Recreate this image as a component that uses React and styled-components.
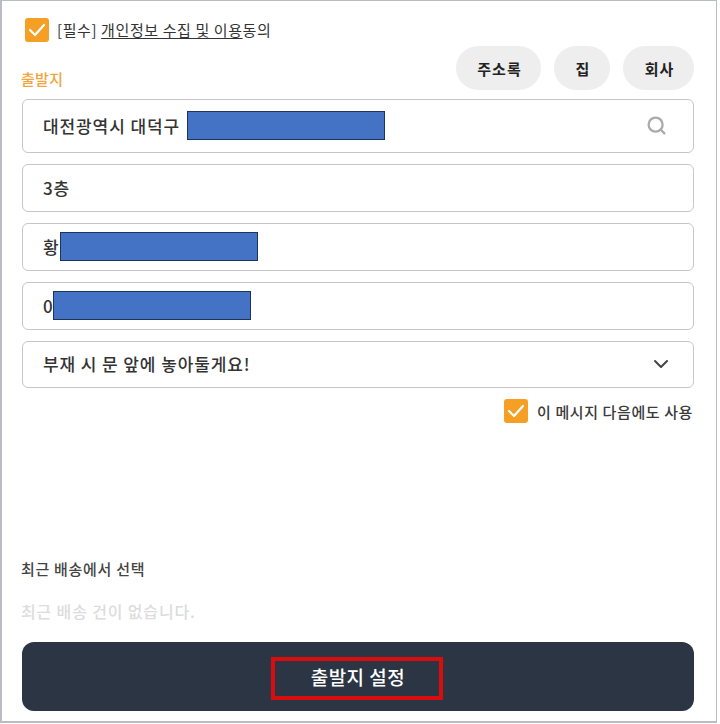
import React from 'react';
import styled, { createGlobalStyle } from 'styled-components';
import { FiSearch, FiChevronDown } from 'react-icons/fi';

const fontStack = `"Noto Sans CJK KR", "Noto Sans", sans-serif`;

const GlobalStyle = createGlobalStyle`
  html, body {
    margin: 0;
    padding: 0;
    background: #fff;
    font-family: ${fontStack};
  }
  * { box-sizing: border-box; }
`;

const Frame = styled.div`
  width: 717px;
  height: 723px;
  border: 1px solid #b9bdc2;
  border-left-width: 2px;
  border-bottom-width: 2px;
  padding: 16px 22px 10px 19px;
  display: flex;
  flex-direction: column;
  background: #fff;
`;

const AgreeRow = styled.div`
  display: flex;
  align-items: center;
  gap: 8px;
  padding-left: 4px;
  height: 25px;
  font-size: 15px;
  letter-spacing: 0.6px;
  color: #333;
`;

const CheckBox = styled.span`
  width: 24px;
  height: 24px;
  border-radius: 3px;
  background: #f5a024;
  display: flex;
  align-items: center;
  justify-content: center;
  flex: none;
`;

const Underlined = styled.span`
  text-decoration: underline;
  text-underline-offset: 2px;
`;

const HeaderRow = styled.div`
  display: flex;
  justify-content: space-between;
  align-items: flex-end;
  margin-top: 4px;
  height: 44px;
`;

const Origin = styled.span`
  font-size: 15px;
  font-weight: 500;
  letter-spacing: 0.3px;
  color: #f0a63c;
  line-height: 20px;
  margin-bottom: 1px;
`;

const Pills = styled.div`
  display: flex;
  gap: 13px;
`;

const Pill = styled.button`
  height: 44px;
  width: ${p => p.$w}px;
  border: none;
  border-radius: 22px;
  background: #eeeeee;
  color: #222;
  font-family: inherit;
  font-size: 15px;
  letter-spacing: 1px;
  font-weight: 700;
  padding: 0 0 0 2px;
`;

const Fields = styled.div`
  display: flex;
  flex-direction: column;
  gap: 11px;
  margin-top: 9px;
  margin-left: 1px;
`;

const Field = styled.div`
  height: ${p => p.$h || 48}px;
  border: 1px solid #c6c6c6;
  border-radius: 6px;
  padding: 0 22px 2px 20px;
  display: flex;
  align-items: center;
  font-size: 17px;
  letter-spacing: 0.9px;
  font-weight: 500;
  color: #333;
  background: #fff;
`;

const Redacted = styled.span`
  width: 198px;
  height: 29px;
  background: #4472c4;
  border: 1px solid #1d3557;
  margin-left: ${p => p.$gap || 0}px;
  flex: none;
`;

const Trailing = styled.span`
  margin-left: auto;
  display: flex;
  align-items: center;
  color: ${p => p.$color};
`;

const RememberRow = styled.div`
  display: flex;
  justify-content: flex-end;
  align-items: center;
  gap: 9px;
  margin-top: 11px;
  padding-right: 1px;
  font-size: 15px;
  letter-spacing: 0.6px;
  font-weight: 500;
  color: #3a3a3a;
  height: 24px;
`;

const Recent = styled.div`
  margin-top: auto;
  margin-left: 1px;
`;

const RecentTitle = styled.div`
  margin-left: -1px;
  font-size: 15px;
  letter-spacing: 0.7px;
  font-weight: 500;
  color: #444;
  line-height: 20px;
`;

const Empty = styled.div`
  margin: 21px 0 0 -1px;
  font-size: 16px;
  letter-spacing: 0.85px;
  font-weight: 500;
  color: #dcdcdc;
  line-height: 22px;
`;

const Submit = styled.button`
  position: relative;
  display: block;
  width: 100%;
  height: 69px;
  margin-top: 20px;
  border: none;
  border-radius: 12px;
  background: #2b3543;
  color: #fff;
  font-family: inherit;
  font-size: 19px;
  letter-spacing: 0.5px;
  font-weight: 500;
  padding: 0;
`;

const Highlight = styled.span`
  position: absolute;
  left: 249px;
  top: 15px;
  width: 172px;
  height: 43px;
  border: 4px solid #d90d0d;
`;

const Check = () => (
  <svg width="18" height="14" viewBox="0 0 18 14" fill="none">
    <path d="M2 7l5 5 9-10" stroke="#fff" strokeWidth="2.2" strokeLinecap="round" strokeLinejoin="round" />
  </svg>
);

export default function App() {
  return (
    <>
      <GlobalStyle />
      <Frame>
        <AgreeRow>
          <CheckBox><Check /></CheckBox>
          <span>[필수] <Underlined>개인정보 수집 및 이용</Underlined>동의</span>
        </AgreeRow>

        <HeaderRow>
          <Origin>출발지</Origin>
          <Pills>
            <Pill $w={85}>주소록</Pill>
            <Pill $w={56}>집</Pill>
            <Pill $w={71}>회사</Pill>
          </Pills>
        </HeaderRow>

        <Fields>
          <Field $h={54}>
            대전광역시 대덕구
            <Redacted $gap={7} />
            <Trailing $color="#aaaaaa"><FiSearch size={21} strokeWidth={2.6} style={{ marginRight: 4 }} /></Trailing>
          </Field>
          <Field>3층</Field>
          <Field>황<Redacted $gap={0} /></Field>
          <Field>0<Redacted $gap={-1} /></Field>
          <Field $h={47}>
            부재 시 문 앞에 놓아둘게요!
            <Trailing $color="#444444"><FiChevronDown size={24} style={{ marginRight: -2 }} /></Trailing>
          </Field>
        </Fields>

        <RememberRow>
          <CheckBox><Check /></CheckBox>
          <span>이 메시지 다음에도 사용</span>
        </RememberRow>

        <Recent>
          <RecentTitle>최근 배송에서 선택</RecentTitle>
          <Empty>최근 배송 건이 없습니다.</Empty>
          <Submit>
            출발지 설정
            <Highlight />
          </Submit>
        </Recent>
      </Frame>
    </>
  );
}
